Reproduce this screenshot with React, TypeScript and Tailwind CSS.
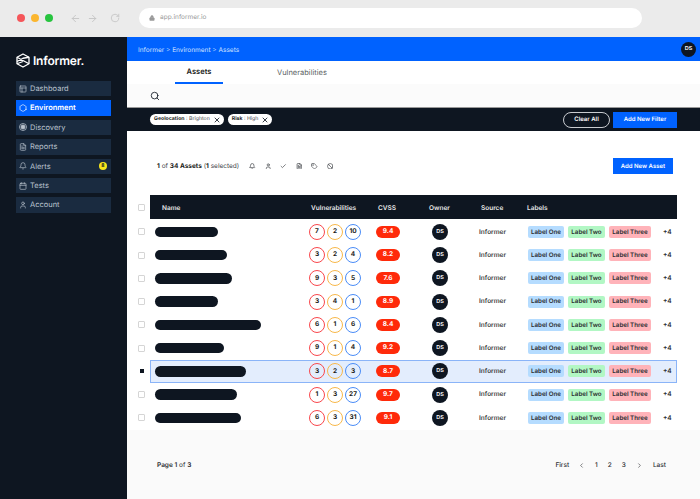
import { ArrowLeft, ArrowRight, Ban, Bell, Calendar, Check, ChevronLeft, ChevronRight, FileText, Hexagon, Lock, PanelsTopLeft, RotateCw, Search, Tag, User, X } from "lucide-react";

const navItems = [
  { name: "Dashboard", icon: <PanelsTopLeft size={8} /> },
  { name: "Environment", icon: <Hexagon size={8} />, active: true },
  { name: "Discovery", icon: <DiscoveryIcon /> },
  { name: "Reports", icon: <FileText size={8} /> },
  { name: "Alerts", icon: <Bell size={8} />, badge: true },
  { name: "Tests", icon: <Calendar size={8} /> },
  { name: "Account", icon: <User size={8} /> },
];

const rows = [
  { bar: 63, v: [7, 2, 10], cvss: "9.4" },
  { bar: 72, v: [3, 2, 4], cvss: "8.2" },
  { bar: 77, v: [9, 3, 5], cvss: "7.6" },
  { bar: 63, v: [3, 4, 1], cvss: "8.9" },
  { bar: 106, v: [6, 1, 6], cvss: "8.4" },
  { bar: 69, v: [9, 1, 4], cvss: "9.2" },
  { bar: 91, v: [3, 2, 3], cvss: "8.7", selected: true },
  { bar: 82, v: [1, 3, 27], cvss: "9.7" },
  { bar: 86, v: [6, 3, 31], cvss: "9.1" },
];

function DiscoveryIcon() {
  return (
    <svg width="8" height="8" viewBox="0 0 16 16" fill="none" stroke="currentColor" strokeWidth="1.6">
      <circle cx="8" cy="8" r="7" />
      <circle cx="8" cy="8" r="4" fill="currentColor" />
    </svg>
  );
}

function Logo() {
  return (
    <svg width="14" height="15" viewBox="0 0 28 30" fill="none" stroke="white" strokeWidth="2.6" strokeLinejoin="round">
      <path d="M14 2 L26 8.5 V21.5 L14 28 L2 21.5 V8.5 Z" />
      <path d="M2 8.5 L26 21.5 M2 17 L14 10.5 L26 8.5 M2 21.5 L14 17" />
    </svg>
  );
}

function Pill({ label, value }: { label: string; value: string }) {
  return (
    <div className="flex h-[11px] items-center gap-[3px] rounded-full bg-white pl-[4px] pr-[3px] text-[5.2px] text-[#44474c]">
      <span>
        <b className="font-bold text-[#1a1c20]">{label}</b> : {value}
      </span>
      <X size={8} strokeWidth={2.5} className="text-[#0e1621]" />
    </div>
  );
}

function Circle({ n, color }: { n: number; color: string }) {
  return (
    <div className={`flex size-[16px] items-center justify-center rounded-full border-[1.25px] text-[6.5px] font-bold text-[#1a1c20] ${color}`}>
      {n}
    </div>
  );
}

function Avatar() {
  return (
    <div className="flex size-[16px] items-center justify-center rounded-full bg-[#0e1621] text-[5.5px] font-semibold text-white">DS</div>
  );
}

export default function App() {
  return (
    <div className="flex h-[499px] w-[700px] flex-col overflow-hidden bg-white font-['Inter',sans-serif] antialiased [text-rendering:geometricPrecision]">
      <div className="flex h-[37px] items-center bg-[#ebebeb] pb-[1px] pl-[17px]">
        <div className="flex gap-[6px]">
          <div className="size-[8px] rounded-full bg-[#f5565a]" />
          <div className="size-[8px] rounded-full bg-[#fbb62f]" />
          <div className="size-[8px] rounded-full bg-[#27c43f]" />
        </div>
        <div className="ml-[17px] flex items-center gap-[6px] text-[#c4c4c4]">
          <ArrowLeft size={11} />
          <ArrowRight size={11} />
          <RotateCw size={10} className="ml-[6px]" />
        </div>
        <div className="ml-[19px] flex h-[20px] w-[503px] items-center gap-[5px] rounded-full bg-white pl-[10px] text-[6.5px] text-[#9a9a9a]">
          <Lock size={6} fill="currentColor" />
          <span>app.informer.io</span>
        </div>
      </div>

      <div className="flex flex-1">
        <aside className="flex w-[127px] flex-col bg-[#0e1621] px-[16px] pt-[15px]">
          <div className="flex h-[17px] items-center gap-[3px] text-white">
            <Logo />
            <span className="text-[12px] font-semibold tracking-[-0.2px]">Informer.</span>
          </div>
          <nav className="mt-[12px] flex flex-col gap-[4px]">
            {navItems.map((item) => (
              <div
                key={item.name}
                className={`flex h-[15.4px] items-center gap-[3px] px-[3px] text-[7.5px] ${item.active ? "bg-[#0062ff] font-semibold text-white" : "bg-[#1a2b40] text-[#b9c2cd]"}`}
              >
                {item.icon}
                <span>{item.name}</span>
                {item.badge && (
                  <div className="ml-auto mr-[1px] flex size-[8px] items-center justify-center rounded-full bg-[#f7e61c] text-[5px] font-bold text-[#0e1621]">8</div>
                )}
              </div>
            ))}
          </nav>
        </aside>

        <main className="flex flex-1 flex-col">
          <div className="flex h-[24px] items-center justify-between bg-[#0062ff] pl-[11px] pr-[4px] text-[6.5px] text-[#cfe0ff]">
            <span className="pt-[3px]">Informer &gt; Environment &gt; Assets</span>
            <div className="flex size-[15px] items-center justify-center rounded-full bg-[#0e1621] text-[5.5px] font-semibold text-white">DS</div>
          </div>

          <div className="flex h-[23px] pl-[48px] text-[7.5px]">
            <div className="flex w-[48px] items-center justify-center border-b-2 border-[#0062ff] font-semibold text-[#1a1c20]">Assets</div>
            <div className="ml-[54px] flex items-center text-[#5c5f64]">Vulnerabilities</div>
          </div>

          <div className="flex h-[24px] items-center border-b border-[#999] bg-[#fbfbfb] pl-[23px]">
            <Search size={10} className="text-[#0e1621]" />
          </div>

          <div className="flex h-[23px] items-center bg-[#0e1621] pl-[23px] pr-[23px]">
            <div className="flex gap-[4px]">
              <Pill label="Geolocation" value="Brighton" />
              <Pill label="Risk" value="High" />
            </div>
            <div className="ml-auto flex h-[16px] w-[47px] items-center justify-center rounded-full border border-[#c9ccd0] text-[6px] font-semibold text-white">Clear All</div>
            <div className="ml-[3px] flex h-[16px] w-[64px] items-center justify-center bg-[#0062ff] text-[6px] font-semibold text-white">Add New Filter</div>
          </div>

          <div className="mt-[27px] flex h-[16px] items-center pl-[30px] pr-[27px]">
            <span className="pt-[2px] text-[6.5px] text-[#44474c]">
              <b className="font-bold text-[#1a1c20]">1</b> of <b className="font-bold text-[#1a1c20]">34 Assets</b> (<b className="font-bold text-[#1a1c20]">1</b> selected)
            </span>
            <div className="ml-[10px] flex items-center gap-[9px] text-[#44474c]">
              <Bell size={6.5} strokeWidth={2.5} />
              <User size={6.5} strokeWidth={2.5} />
              <Check size={6.5} strokeWidth={2.5} />
              <FileText size={6.5} strokeWidth={2.5} />
              <Tag size={6.5} strokeWidth={2.5} />
              <Ban size={6.5} strokeWidth={2.5} />
            </div>
            <div className="ml-auto flex h-[16px] w-[60px] items-center justify-center bg-[#0062ff] text-[6px] font-semibold text-white">Add New Asset</div>
          </div>

          <div className="mt-[21px] flex h-[24px] items-center pl-[11px]">
            <div className="size-[7px] rounded-[1px] border border-[#d5d5d5]" />
            <div className="ml-[5px] flex h-[24px] w-[527px] items-center bg-[#0e1621] pt-[3px] text-[6.5px] font-semibold text-[#e8e8e8]">
              <span className="ml-[12px] w-[149px]">Name</span>
              <span className="w-[67px]">Vulnerabilities</span>
              <span className="w-[51px]">CVSS</span>
              <span className="w-[52px]">Owner</span>
              <span className="w-[46px]">Source</span>
              <span>Labels</span>
            </div>
          </div>

          <div className="flex flex-col pl-[11px] pt-[1.25px]">
            {rows.map((row, i) => (
              <div key={i} className="flex h-[23.25px] items-center">
                <div className={`flex size-[7px] items-center justify-center rounded-[1px] ${row.selected ? "" : "border border-[#d5d5d5]"}`}>
                  {row.selected && <div className="size-[4px] bg-[#0e1621]" />}
                </div>
                <div className={`ml-[5px] flex h-[23.25px] w-[527px] items-center ${row.selected ? "border border-[#8ab4f8] bg-[#e3edfd] pl-[4px]" : "pl-[5px]"}`}>
                  <div className="w-[154px]">
                    <div className="h-[10.5px] rounded-full bg-[#0e1621]" style={{ width: row.bar }} />
                  </div>
                  <div className="flex gap-[2px]">
                    <Circle n={row.v[0]} color="border-[#f9474c]" />
                    <Circle n={row.v[1]} color="border-[#f8b84a]" />
                    <Circle n={row.v[2]} color="border-[#4a8cf7]" />
                  </div>
                  <div className="ml-[15px] flex h-[12px] w-[24px] items-center justify-center rounded-full bg-[#ff2a0a] text-[6.5px] font-bold text-white">{row.cvss}</div>
                  <div className="ml-[32px]">
                    <Avatar />
                  </div>
                  <div className="ml-[31px] w-[41px] pt-[1px] text-[6.5px] font-semibold text-[#3d3f44]">Informer</div>
                  <div className="ml-[8px] flex gap-[4px] text-[6.2px] font-semibold text-[#2b2d31]">
                    <div className="flex h-[12px] w-[36px] items-center justify-center rounded-[2px] bg-[#b5dcff] pt-[1px]">Label One</div>
                    <div className="flex h-[12px] w-[37px] items-center justify-center rounded-[2px] bg-[#b2f7c4] pt-[1px]">Label Two</div>
                    <div className="flex h-[12px] w-[42px] items-center justify-center rounded-[2px] bg-[#ffb3b9] pt-[1px]">Label Three</div>
                  </div>
                  <div className="ml-[12px] pt-[1px] text-[6.5px] font-semibold text-[#2b2d31]">+4</div>
                </div>
              </div>
            ))}
          </div>

          <div className="flex flex-1 items-start bg-[#fafafa] pl-[30px] pr-[34px] pt-[31px] text-[6.5px] text-[#2b2d31]">
            <span>
              <b className="font-semibold">Page 1</b> of <b className="font-semibold">3</b>
            </span>
            <div className="ml-auto flex items-center font-medium">
              <span>First</span>
              <ChevronLeft size={7} className="ml-[9px]" />
              <span className="ml-[10px]">1</span>
              <span className="ml-[10px]">2</span>
              <span className="ml-[10px]">3</span>
              <ChevronRight size={7} className="ml-[10px]" />
              <span className="ml-[10px]">Last</span>
            </div>
          </div>
        </main>
      </div>
    </div>
  );
}
